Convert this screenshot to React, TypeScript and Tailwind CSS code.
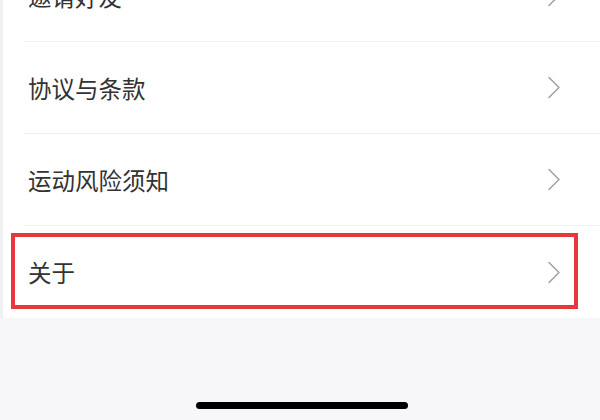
import React from 'react';

const items = ['邀请好友', '协议与条款', '运动风险须知', '关于'];

const Chevron = () => (
  <svg width="14" height="23" viewBox="0 0 14 23" fill="none" className="shrink-0">
    <path d="M2 1.5 L12 11.5 L2 21.5" stroke="#a3a3a3" strokeWidth="1.6" strokeLinecap="round" strokeLinejoin="round" />
  </svg>
);

export default function App() {
  return (
    <div
      className="w-[600px] h-[420px] overflow-hidden bg-[#f7f7f9] relative"
      style={{ fontFamily: '"Noto Sans CJK SC", "Noto Sans", sans-serif' }}
    >
      <div className="bg-white border-l-[3px] border-[#f0f0f2] -mt-[50px]">
        {items.map((label, i) => (
          <div key={label} className="relative pl-[21px]">
            <div
              className={
                'h-[92px] flex items-center justify-between pr-[39px] ' +
                (i < items.length - 1 ? 'border-b border-[#f1f1f3]' : '')
              }
            >
              <span className="text-[23.5px] text-[#333333] leading-none pl-[4px] pt-[2px]">{label}</span>
              <Chevron />
            </div>
            {label === '关于' && (
              <div className="absolute left-[8px] right-[22px] top-[7px] bottom-[9px] border-[4px] border-[#e9383d] pointer-events-none" />
            )}
          </div>
        ))}
      </div>
      <div className="absolute left-[196px] top-[402px] w-[212px] h-[7px] rounded-full bg-black" />
    </div>
  );
}
